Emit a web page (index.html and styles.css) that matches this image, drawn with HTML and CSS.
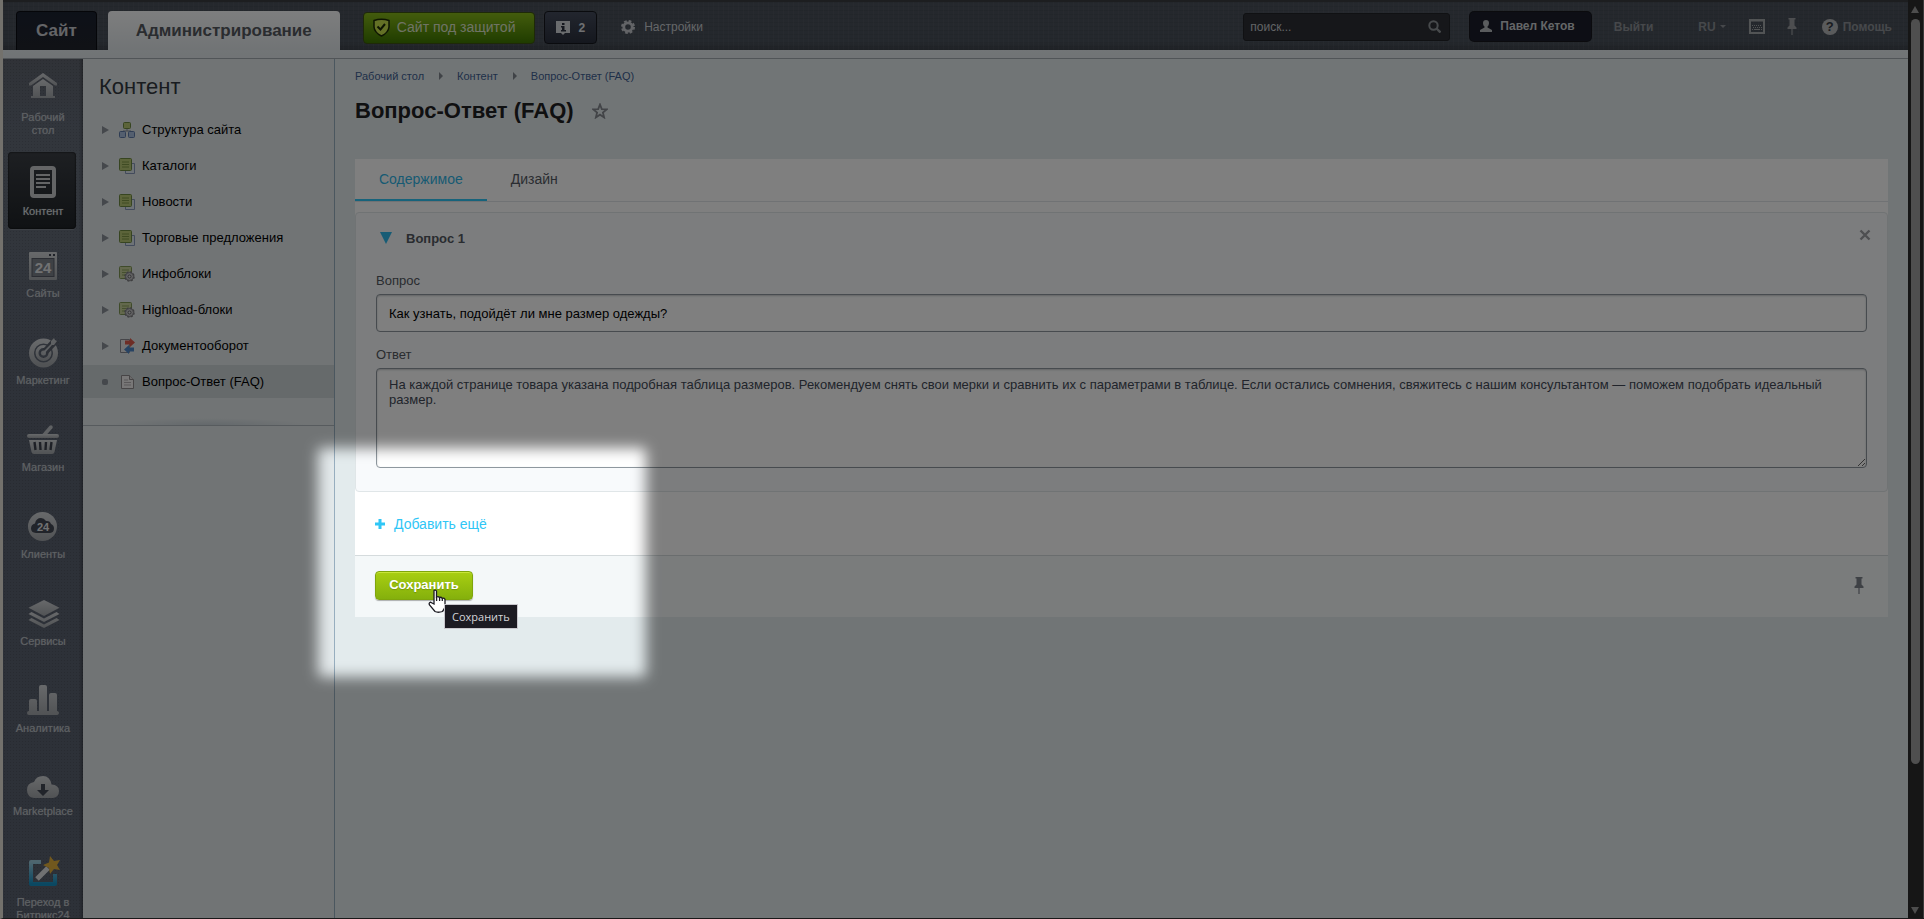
FILE: index.html
```html
<!DOCTYPE html>
<html lang="ru">
<head>
    <meta charset="UTF-8">
    <meta name="viewport" content="width=device-width, initial-scale=1.0">
    <title>Вопрос-Ответ (FAQ)</title>
    <link rel="stylesheet" href="styles.css">
</head>
<body>
    <!-- Общие градиенты и повторяющиеся иконки -->
    <svg class="defs" width="0" height="0" aria-hidden="true">
        <defs>
            <linearGradient id="metal" x1="0" y1="0" x2="0" y2="1"><stop offset="0" stop-color="#d0d3d6"/><stop offset="1" stop-color="#a2a6aa"/></linearGradient>
            <linearGradient id="blue" x1="0" y1="0" x2="0" y2="1"><stop offset="0" stop-color="#9ccbdd"/><stop offset="1" stop-color="#1490c4"/></linearGradient>
            <symbol id="i-block" viewBox="0 0 16 16">
                <path d="M6.500 5.500h9v10h-9z" fill="#dde6ee" stroke="#8796b8"/>
                <rect x=".5" y=".5" width="12" height="12" rx="1" fill="#b9c974" stroke="#6f8a43"/>
                <path d="M3 4h7M3 6.500h7M3 9h7" stroke="#7f9647"/>
            </symbol>
            <symbol id="i-gear" viewBox="0 0 16 16">
                <rect x=".5" y=".5" width="12" height="12" rx="1" fill="#c6d19a" stroke="#7f9655"/>
                <path d="M3 4h7M3 6.500h4M3 9h3" stroke="#8ba05c"/>
                <circle cx="10.500" cy="10.500" r="4.500" fill="#c4c4c6" stroke="#77777b" stroke-width="1.500" stroke-dasharray="2.200 1.300"/>
                <circle cx="10.500" cy="10.500" r="4" fill="#c4c4c6" stroke="#77777b" stroke-width=".8"/>
                <circle cx="10.500" cy="10.500" r="1.500" fill="#e2e2e2" stroke="#66666a"/>
            </symbol>
            <symbol id="i-pin" viewBox="0 0 10 17">
                <path d="M1.500 0h7v1.500h-1v6l2 2V11H5.600v6H4.400v-6H.5V9.500l2-2v-6h-1z" fill="currentColor"/>
            </symbol>
        </defs>
    </svg>

    <header class="header">
        <a class="site-tab" href="#">Сайт</a>
        <a class="site-tab site-tab-active" href="#">Администрирование</a>
        <button class="shield-btn" type="button">
            <svg width="17" height="19" viewBox="0 0 17 19"><path d="M1 2.500Q8.500 0 16 2.500V9Q15.500 14.500 8.500 18 1.500 14.500 1 9z" fill="#c9e24c" stroke="#1d2b04" stroke-width="1.500"/><path d="M4.500 8.500l3 3L12 6" fill="none" stroke="#1d2b04" stroke-width="2"/></svg>
            Сайт под защитой
        </button>
        <button class="notify-btn" type="button">
            <svg width="14" height="14" viewBox="0 0 14 14"><path d="M0 0h14v12H9l-2 2-2-2H0z" fill="#d5d8dc"/><path d="M6 2h2.500v2H6zM5 5h3.500v4H10v1.500H5V9h1V6.500H5z" fill="#2b313f"/></svg>
            2
        </button>
        <a class="settings" href="#">
            <svg width="14" height="14" viewBox="0 0 14 14"><circle cx="7" cy="7" r="4.200" fill="none" stroke="#c6c9ce" stroke-width="2.800"/><circle cx="7" cy="7" r="6" fill="none" stroke="#c6c9ce" stroke-width="2" stroke-dasharray="2.700 2.010"/></svg>
            Настройки
        </a>
        <div class="header-right">
            <form class="search">
                <input type="text" placeholder="поиск..." aria-label="поиск">
                <svg width="13" height="13" viewBox="0 0 13 13"><circle cx="5.500" cy="5.500" r="4.200" fill="none" stroke="#8f9499" stroke-width="2"/><path d="M8.500 8.500l4 4" stroke="#8f9499" stroke-width="2.400"/></svg>
            </form>
            <a class="user" href="#">
                <svg width="12" height="12" viewBox="0 0 12 12"><path d="M6 0c2 0 3 1.300 3 3 0 1.500-.7 3-1.500 3.600v1L12 10v2H0v-2l4.500-2.400v-1C3.700 6 3 4.500 3 3c0-1.700 1-3 3-3z" fill="#b4b8bd"/></svg>
                Павел Кетов
            </a>
            <a class="logout" href="#">Выйти</a>
            <button class="lang" type="button">RU<span class="caret"></span></button>
            <a class="hicon hicon-key" href="#" aria-label="Горячие клавиши">
                <svg width="16" height="15" viewBox="0 0 16 15"><path d="M0 0h16v15H0zM2 2.500v10.500h12V2.500z" fill="#a5a8ab" fill-rule="evenodd"/><path d="M3 6.500h10M4 8.500h9" stroke="#a5a8ab" stroke-dasharray="1 1"/><path d="M3 10.500h1M5 10.500h6M12 10.500h1" stroke="#a5a8ab"/></svg>
            </a>
            <a class="hicon hicon-pin" href="#" aria-label="Закрепить"><svg width="10" height="17"><use href="#i-pin"/></svg></a>
            <a class="help" href="#"><span class="help-mark">?</span>Помощь</a>
        </div>
    </header>

    <div class="page">
        <nav class="sidebar">
            <a class="side-item side-home" href="#">
                <svg width="32" height="32" viewBox="0 0 32 32"><path d="M16 2l14 10v2.500h-2L16 6 4 14.500H2V12z" fill="url(#metal)"/><path d="M6 15l10-7 10 7v10h2v2H4v-2h2zm7 0v10h6V15z" fill="url(#metal)" fill-rule="evenodd"/></svg>
                <span>Рабочий стол</span>
            </a>
            <a class="side-item side-active" href="#">
                <svg width="32" height="32" viewBox="0 0 32 32"><path d="M7 0h18q4 0 4 4v24q0 4-4 4H7q-4 0-4-4V4q0-4 4-4zm0 4v24h18V4z" fill="#c9cbcd" fill-rule="evenodd"/><path d="M9 9h14M9 13h14M9 17h14M9 21h10" stroke="#c9cbcd" stroke-width="2"/></svg>
                <span>Контент</span>
            </a>
            <a class="side-item" href="#">
                <svg width="32" height="32" viewBox="0 0 32 32"><rect x="2" y="4" width="28" height="28" rx="1" fill="url(#metal)"/><path d="M22 6h2v2h-2zM26 6h2v2h-2z" fill="#3f4450"/><rect x="5" y="10.500" width="22" height="18" fill="#7d828a" stroke="#565b67"/><text x="16" y="25" class="svg-num" font-size="15">24</text></svg>
                <span>Сайты</span>
            </a>
            <a class="side-item" href="#">
                <svg width="32" height="32" viewBox="0 0 32 32"><g fill="none" stroke="url(#metal)"><circle cx="16.500" cy="18" r="12" stroke-width="5"/><circle cx="16.500" cy="18" r="6.500" stroke-width="3"/></g><path d="M17 18L29 5" stroke="#5b616d" stroke-width="7"/><circle cx="16.500" cy="18" r="2.500" fill="#b7bbbf"/><path d="M16 17l8-8V6l3-3 1 2 2 1-3 4h-2l-8 9z" fill="#bfc3c7"/></svg>
                <span>Маркетинг</span>
            </a>
            <a class="side-item" href="#">
                <svg width="32" height="32" viewBox="0 0 32 32"><path d="M17 13l7-8" stroke="#bfc3c7" stroke-width="3.500" stroke-linecap="round"/><rect y="12" width="32" height="4" rx="2" fill="url(#metal)"/><path d="M2 18h28l-2.500 12q-.5 2-2.500 2H7q-2 0-2.500-2z" fill="url(#metal)"/><path d="M7.500 20l1 8M13 20l.5 8M19 20l-.5 8M24.500 20l-1 8" stroke="#3c414c" stroke-width="2.400"/></svg>
                <span>Магазин</span>
            </a>
            <a class="side-item" href="#">
                <svg width="32" height="32" viewBox="0 0 32 32"><circle cx="15.500" cy="17.500" r="14.500" fill="url(#metal)"/><path d="M9 24q-5-.5-5-4.500 0-4 4-5 1-5.500 6-5.500 3 0 5 3 4-.5 5 3 3 1 3 4.500 0 4-4 4.500z" fill="#434854"/><text x="16" y="21.500" class="svg-num" font-size="11">24</text></svg>
                <span>Клиенты</span>
            </a>
            <a class="side-item" href="#">
                <svg width="32" height="32" viewBox="0 0 32 32"><path d="M17 4l15.500 7.800L17 20 1.500 11.800z" fill="url(#metal)"/><path d="M1.500 18l3-2L17 22.500 29.500 16l3 2L17 26z M1.500 24l3-2L17 28.500 29.500 22l3 2L17 32z" fill="url(#metal)"/></svg>
                <span>Сервисы</span>
            </a>
            <a class="side-item" href="#">
                <svg width="32" height="32" viewBox="0 0 32 32"><path d="M2 28V18q0-2 2-2h4q2 0 2 2v10h2V4q0-2 2-2h4q2 0 2 2v24h2V12q0-2 2-2h4q2 0 2 2v16q2 0 2 2t-2 2H2q-2 0-2-2t2-2z" fill="url(#metal)"/></svg>
                <span>Аналитика</span>
            </a>
            <a class="side-item side-market" href="#">
                <svg width="32" height="28" viewBox="0 0 32 28"><path d="M7 28q-7-1-7-8t7-8q2-6 9-6 7 0 8.500 8.500Q32 15 32 21t-6 7z" fill="url(#metal)"/><path d="M14 14h4v6h4l-6 6-6-6h4z" fill="#434854"/></svg>
                <span>Marketplace</span>
            </a>
            <a class="side-item" href="#">
                <svg width="32" height="36" viewBox="0 0 32 36"><path d="M14 9H4v22h24V21" fill="none" stroke="url(#blue)" stroke-width="4" stroke-linejoin="round"/><path d="M10 26l11-11" stroke="#e0e2e4" stroke-width="5"/><path d="M23 3l4 5 6-1-3 5 3 5-6-1-4 5-1-6-6-3 6-2.500z" fill="#e3b03c"/></svg>
                <span>Переход в Битрикс24</span>
            </a>
        </nav>

        <aside class="menu">
            <div class="menu-top">
                <h2>Контент</h2>
                <ul>
                    <li><a href="#"><i class="arrow"></i><svg width="16" height="16" viewBox="0 0 16 16"><path d="M8 6v3M4 9h8" stroke="#87909c"/><rect x="4.500" y=".5" width="7" height="6" rx="1" fill="#b9c974" stroke="#6f8a43"/><rect x=".5" y="9.500" width="6" height="6" rx="1" fill="#a9bede" stroke="#5e7ba8"/><rect x="9.500" y="9.500" width="6" height="6" rx="1" fill="#a9bede" stroke="#5e7ba8"/></svg>Структура сайта</a></li>
                    <li><a href="#"><i class="arrow"></i><svg width="16" height="16"><use href="#i-block"/></svg>Каталоги</a></li>
                    <li><a href="#"><i class="arrow"></i><svg width="16" height="16"><use href="#i-block"/></svg>Новости</a></li>
                    <li><a href="#"><i class="arrow"></i><svg width="16" height="16"><use href="#i-block"/></svg>Торговые предложения</a></li>
                    <li><a href="#"><i class="arrow"></i><svg width="16" height="16"><use href="#i-gear"/></svg>Инфоблоки</a></li>
                    <li><a href="#"><i class="arrow"></i><svg width="16" height="16"><use href="#i-gear"/></svg>Highload-блоки</a></li>
                    <li><a href="#"><i class="arrow"></i><svg width="16" height="16" viewBox="0 0 16 16"><path d="M1.500 1.500h9v13h-9z" fill="#e6e6e8" stroke="#8b8b93"/><path d="M6 2.500h5V0l5 4.500L11 9V6.500H6z" fill="#dc5b4c"/><path d="M15 9.500h-5V7l-5 4.500 5 4.500v-2.500h5z" fill="#4f86c6"/></svg>Документооборот</a></li>
                    <li class="current"><a href="#"><i class="dot"></i><svg width="16" height="16" viewBox="0 0 16 16"><path d="M2.500 1.500h8l4 4v9h-12z" fill="#f0eeee" stroke="#8f8b8d"/><path d="M10.500 1.500v4h4" fill="#d6d4d4" stroke="#8f8b8d"/><path d="M5 6h4M5 8.500h7M5 11h7" stroke="#b5b1b3"/></svg>Вопрос-Ответ (FAQ)</a></li>
                </ul>
            </div>
        </aside>

        <main class="main">
            <div class="crumbs">
                <a href="#">Рабочий стол</a><i></i><a href="#">Контент</a><i></i><a href="#">Вопрос-Ответ (FAQ)</a>
            </div>
            <h1>Вопрос-Ответ (FAQ)
                <svg width="16" height="16" viewBox="0 0 16 16"><path d="M8 1.500l1.800 4.600 4.900.3-3.800 3.100 1.200 4.900L8 11.700l-4.100 2.700 1.200-4.900L1.300 6.400l4.900-.3z" fill="none" stroke="#84888f" stroke-width="1.800"/></svg>
            </h1>

            <form class="panel">
                <div class="tabs">
                    <button class="tab tab-active" type="button">Содержимое</button>
                    <button class="tab" type="button">Дизайн</button>
                </div>
                <section class="question">
                    <div class="question-head">
                        <span class="toggle"></span>
                        <b>Вопрос 1</b>
                        <button class="remove" type="button" aria-label="Удалить"><svg width="12" height="12" viewBox="0 0 12 12"><path d="M1.500 1.500l9 9M10.500 1.500l-9 9" stroke="#9c9ea2" stroke-width="2.400"/></svg></button>
                    </div>
                    <label for="q1">Вопрос</label>
                    <input id="q1" type="text" value="Как узнать, подойдёт ли мне размер одежды?">
                    <label for="a1">Ответ</label>
                    <textarea id="a1" spellcheck="false">На каждой странице товара указана подробная таблица размеров. Рекомендуем снять свои мерки и сравнить их с параметрами в таблице. Если остались сомнения, свяжитесь с нашим консультантом — поможем подобрать идеальный размер.</textarea>
                </section>
                <div class="add-row">
                    <button class="add" type="button"><svg width="10" height="10" viewBox="0 0 10 10"><path d="M5 0v10M0 5h10" stroke="#2fc6f6" stroke-width="3"/></svg>Добавить ещё</button>
                </div>
                <div class="footer">
                    <div class="save-wrap">
                        <button class="save" type="button">Сохранить</button>
                        <svg class="cursor" width="19" height="24" viewBox="0 0 19 24"><path d="M6 1.500q1.500-1 2.500.5v6q2-1 3 .6 1.500-.9 2.700.7 1.800-.6 2.800 1V17q0 2.500-2.500 5.500Q10 24 7 22.500L1.500 16q-1-2 1-2.800L6 15z" fill="#fff" stroke="#1c1b22" stroke-width="1.300"/><path d="M8.600 8v4M11.600 9v3M14.300 9.500V12" stroke="#1c1b22" stroke-width="1.300"/></svg>
                        <span class="tooltip" role="tooltip">Сохранить</span>
                    </div>
                    <a class="footer-pin" href="#" aria-label="Закрепить панель"><svg width="10" height="17"><use href="#i-pin"/></svg></a>
                </div>
            </form>
        </main>
    </div>

    <div class="scrollbar"><i class="sb-up"></i><i class="sb-thumb"></i><i class="sb-down"></i></div>
    <!-- Затемнение с подсвеченным окном вокруг кнопки -->
    <div class="spotlight"></div>
</body>
</html>
```
FILE: styles.css
```css
* {
    box-sizing: border-box;
}
body {
    margin: 0;
    height: 100vh;
    overflow: hidden;
    display: flex;
    flex-direction: column;
    position: relative;
    padding-right: 16px;
    border-left: 3px solid #e6e2d8;
    border-bottom: 1px solid #333;
    background: #e3ebed;
    font-family: "Liberation Sans", Arial, sans-serif;
    font-size: 13px;
    color: #000;
}
a {
    color: inherit;
    text-decoration: none;
}
button, input, textarea {
    font-family: inherit;
    margin: 0;
}
button {
    border: none;
    background: none;
    padding: 0;
    cursor: pointer;
}
svg {
    flex: none;
}
.defs {
    position: absolute;
}

/* Верхняя панель */
.header {
    flex: none;
    display: flex;
    align-items: flex-start;
    height: 59px;
    padding: 9px 16px 0 13px;
    border-top: 2px solid #3a3c40;
    border-bottom: 1px solid #a3abb0;
    background:
        linear-gradient(#e4ebee, #e2e8ec) 0 bottom / 100% 8px no-repeat,
        repeating-linear-gradient(90deg, rgba(255, 255, 255, .03) 0 1px, transparent 1px 5px),
        repeating-linear-gradient(rgba(0, 0, 0, .05) 0 1px, transparent 1px 4px),
        linear-gradient(#4a505a, #49505a 40px, #3e434b 48px);
    font-size: 12px;
    color: #c9ccd0;
}
.site-tab {
    height: 39px;
    padding: 0 19px;
    margin-right: 11px;
    border: 1px solid #0b0c12;
    border-bottom: none;
    border-radius: 4px 4px 0 0;
    background: linear-gradient(#1b2231, #21242c);
    color: #c8cacf;
    font-size: 17px;
    font-weight: bold;
    line-height: 38px;
}
.site-tab-active {
    padding: 0 28px;
    border: none;
    margin-right: 23px;
    background: linear-gradient(#fbfcfd, #e2e8eb);
    color: #54585f;
    line-height: 39px;
}
.shield-btn {
    display: flex;
    align-items: center;
    gap: 7px;
    height: 32px;
    margin-top: 1px;
    padding: 0 19px 2px 9px;
    border: 1px solid #3c5210;
    border-radius: 4px;
    background: linear-gradient(#87b81a, #3f7800);
    color: #dfe6cb;
    font-size: 14px;
}
.notify-btn {
    display: flex;
    align-items: center;
    gap: 8px;
    height: 33px;
    margin-left: 9px;
    padding: 0 11px;
    border: 1px solid #14161c;
    border-radius: 4px;
    background: linear-gradient(#454c5d, #2a2f3c);
    color: #dfe1e5;
    font-size: 12px;
    font-weight: bold;
}
.settings {
    display: flex;
    align-items: center;
    gap: 9px;
    height: 32px;
    margin-left: 24px;
}
.header-right {
    display: flex;
    align-items: center;
    height: 31px;
    margin-left: auto;
    color: #8d9197;
    font-weight: bold;
}
.search {
    display: flex;
    align-items: center;
    width: 207px;
    height: 28px;
    padding: 0 8px 0 6px;
    border: 1px solid #202226;
    border-radius: 3px;
    background: #2c2f35;
}
.search input {
    flex: 1;
    min-width: 0;
    padding: 0;
    border: none;
    outline: none;
    background: none;
    color: #c4c7ca;
    font-size: 12px;
}
.search input::placeholder {
    color: #c4c7ca;
}
.user {
    display: flex;
    align-items: center;
    gap: 8px;
    height: 29px;
    margin-left: 20px;
    padding: 0 16px 2px 10px;
    border-radius: 4px;
    background: #1a1d2a;
    box-shadow: 0 0 0 1px #16171d;
    color: #c9ccd0;
}
.logout {
    margin-left: 23px;
}
.lang {
    display: flex;
    align-items: center;
    gap: 4px;
    margin-left: 45px;
    color: inherit;
    font-size: 12px;
    font-weight: bold;
}
.caret {
    border: 3px solid transparent;
    border-top-color: #8d9197;
    border-bottom: none;
}
.hicon {
    display: flex;
    color: #9a9da1;
}
.hicon-key {
    margin-left: 23px;
}
.hicon-pin {
    margin-left: 22px;
}
.help {
    display: flex;
    align-items: center;
    gap: 5px;
    margin-left: 25px;
}
.help-mark {
    width: 16px;
    height: 16px;
    border-radius: 50%;
    background: #b4b6b9;
    color: #33373e;
    font-size: 13px;
    line-height: 16px;
    text-align: center;
}

.page {
    flex: 1;
    min-height: 0;
    display: flex;
    overflow: hidden;
}

/* Левая колонка с разделами */
.sidebar {
    flex: none;
    width: 80px;
    padding: 0 7px 0 5px;
    background:
        linear-gradient(90deg, transparent 76px, rgba(0, 0, 0, .25)),
        radial-gradient(rgba(0, 0, 0, .12) 1px, transparent 1px) 0 0 / 3px 3px,
        linear-gradient(#60656f, #646c79 70px, #646c79 180px, #5b6270 380px);
}
.side-item {
    display: flex;
    flex-direction: column;
    align-items: center;
    margin-bottom: 10px;
    padding: 14px 0 11px 2px;
    border-radius: 4px;
    color: #bdc2c7;
    font-size: 11px;
    line-height: 13px;
    text-align: center;
    text-shadow: 0 0 1px rgba(189, 194, 199, .6);
}
.side-item svg {
    margin-bottom: 7px;
    overflow: visible;
}
.side-home {
    margin-bottom: 4px;
}
.side-active {
    margin-bottom: 5px;
    background: linear-gradient(#3b3f45, #202428);
    box-shadow: 0 1px 0 #7d828c, inset 0 0 2px #000;
    color: #dfe2e5;
}
.side-home svg {
    margin: -2px 0 8px;
}
.svg-num {
    font-family: "Liberation Sans", Arial, sans-serif;
    font-weight: bold;
    text-anchor: middle;
    text-shadow: none;
    fill: #e3e5e7;
}

/* Меню раздела */
.menu {
    flex: none;
    width: 252px;
    border-right: 1px solid #97aebf;
    background: #e3e9eb;
}
.menu-top {
    padding: 15px 0 27px;
    border-bottom: 1px solid #aeb7bd;
    background: radial-gradient(closest-side, #c8d2d8, rgba(200, 210, 216, 0)) 50% 102% / 200px 14px no-repeat;
}
.menu h2 {
    margin: 0 0 13px;
    padding-left: 16px;
    color: #333940;
    font-size: 22px;
    font-weight: normal;
    line-height: 26px;
}
.menu ul {
    display: flex;
    flex-direction: column;
    gap: 3px;
    margin: 0;
    padding: 0;
    list-style: none;
}
.menu a {
    display: flex;
    align-items: center;
    height: 33px;
    padding-left: 19px;
}
.menu a svg {
    margin: 0 7px 0 10px;
}
.current {
    background: #ccd4d7;
}
.arrow {
    border: 4px solid transparent;
    border-left: 7px solid #8a9099;
    border-right: none;
}
.dot {
    width: 6px;
    height: 6px;
    margin-right: 1px;
    border-radius: 2px;
    background: #8a9099;
}

/* Рабочая область */
.main {
    flex: 1;
    min-width: 0;
    padding: 9px 20px 20px;
}
.crumbs {
    display: flex;
    align-items: center;
    height: 16px;
    color: #3f5f92;
    font-size: 11px;
}
.crumbs i {
    margin: 0 14px 0 15px;
    border: 4px solid transparent;
    border-left-color: #80878e;
    border-right: none;
}
h1 {
    display: flex;
    align-items: center;
    gap: 18px;
    margin: 13px 0 35px;
    color: #1f2023;
    font-size: 22px;
    line-height: 27px;
}
.panel {
    background: #fff;
}
.tabs {
    display: flex;
    height: 43px;
    margin-bottom: 10px;
    border-bottom: 1px solid #e1e5e8;
}
.tab {
    padding: 0 24px;
    border-bottom: 2px solid transparent;
    color: #555a63;
    font-size: 14px;
}
.tab-active {
    border-bottom-color: #2fc6f6;
    color: #2fb5e6;
}
.question {
    padding: 15px 20px 23px;
    border: 1px solid #e0e6e8;
    border-radius: 4px;
    background: #f8fafc;
}
.question-head {
    display: flex;
    align-items: center;
    height: 20px;
    margin-bottom: 25px;
    padding: 0 0 0 4px;
    color: #535860;
}
.remove {
    margin-left: auto;
    margin-right: -4px;
    padding: 0 0 4px;
}
.toggle {
    margin-right: 14px;
    border: 6px solid transparent;
    border-top: 12px solid #2fb8ea;
    border-bottom: none;
}
.question label {
    display: block;
    margin-bottom: 5px;
    color: #535860;
    line-height: 16px;
}
.question input, .question textarea {
    display: block;
    width: 100%;
    border: 1px solid #8e979e;
    border-radius: 4px;
    background: #fff;
    box-shadow: inset 0 1px 2px rgba(60, 70, 80, .3);
    font-size: 13px;
}
.question input {
    height: 38px;
    margin-bottom: 15px;
    padding: 0 12px;
    color: #000;
}
.question textarea {
    height: 100px;
    padding: 8px 12px;
    color: #424956;
    line-height: 15px;
    resize: vertical;
}
.add-row {
    display: flex;
    align-items: center;
    height: 63px;
    padding-left: 20px;
}
.add {
    display: flex;
    align-items: center;
    gap: 9px;
    color: #2fc6f6;
    font-size: 14px;
}
.footer {
    display: flex;
    align-items: center;
    justify-content: space-between;
    height: 62px;
    padding: 0 24px 2px 20px;
    border-top: 1px solid #d5dbdd;
    background: #f4f8f9;
}
.save-wrap {
    position: relative;
}
.save {
    display: block;
    width: 98px;
    height: 29px;
    padding-bottom: 2px;
    border: 1px solid #7fa50c;
    border-radius: 4px;
    background: linear-gradient(#a9cf12, #84b00c);
    box-shadow: 0 1px 1px rgba(0, 0, 0, .3), inset 0 1px 0 #c9e53a;
    color: #fff;
    font-size: 13px;
    font-weight: bold;
    text-shadow: 0 1px 1px rgba(0, 0, 0, .2);
}
.cursor {
    position: absolute;
    left: 53px;
    top: 18px;
}
.tooltip {
    position: absolute;
    left: 69px;
    top: 33px;
    padding: 0 7px;
    border: 1px solid #c9c7cd;
    background: #1c1b22;
    color: #d5d5d9;
    font-family: "Open Sans", "Noto Sans", sans-serif;
    font-size: 11px;
    line-height: 23px;
    white-space: nowrap;
}
.footer-pin {
    display: flex;
    color: #7d828b;
}

/* Полоса прокрутки */
.scrollbar {
    position: absolute;
    top: 0;
    right: 0;
    bottom: 0;
    display: flex;
    flex-direction: column;
    align-items: center;
    width: 16px;
    padding: 6px 1px 4px 0;
    border-right: 1px solid #777;
    background: #2c2c2c;
}
.sb-up {
    border: 4px solid transparent;
    border-top: none;
    border-bottom: 7px solid #9a9a9a;
}
.sb-thumb {
    width: 9px;
    height: 82%;
    margin-top: 6px;
    border-radius: 5px;
    background: #9f9f9f;
}
.sb-down {
    margin-top: auto;
    border: 4px solid transparent;
    border-bottom: none;
    border-top: 7px solid #9a9a9a;
}

.spotlight {
    position: fixed;
    left: 318px;
    top: 448px;
    width: 328px;
    height: 229px;
    border-radius: 4px;
    box-shadow: 0 0 0 2000px rgba(0, 0, 0, .5);
    filter: blur(7px);
    pointer-events: none;
}
```
